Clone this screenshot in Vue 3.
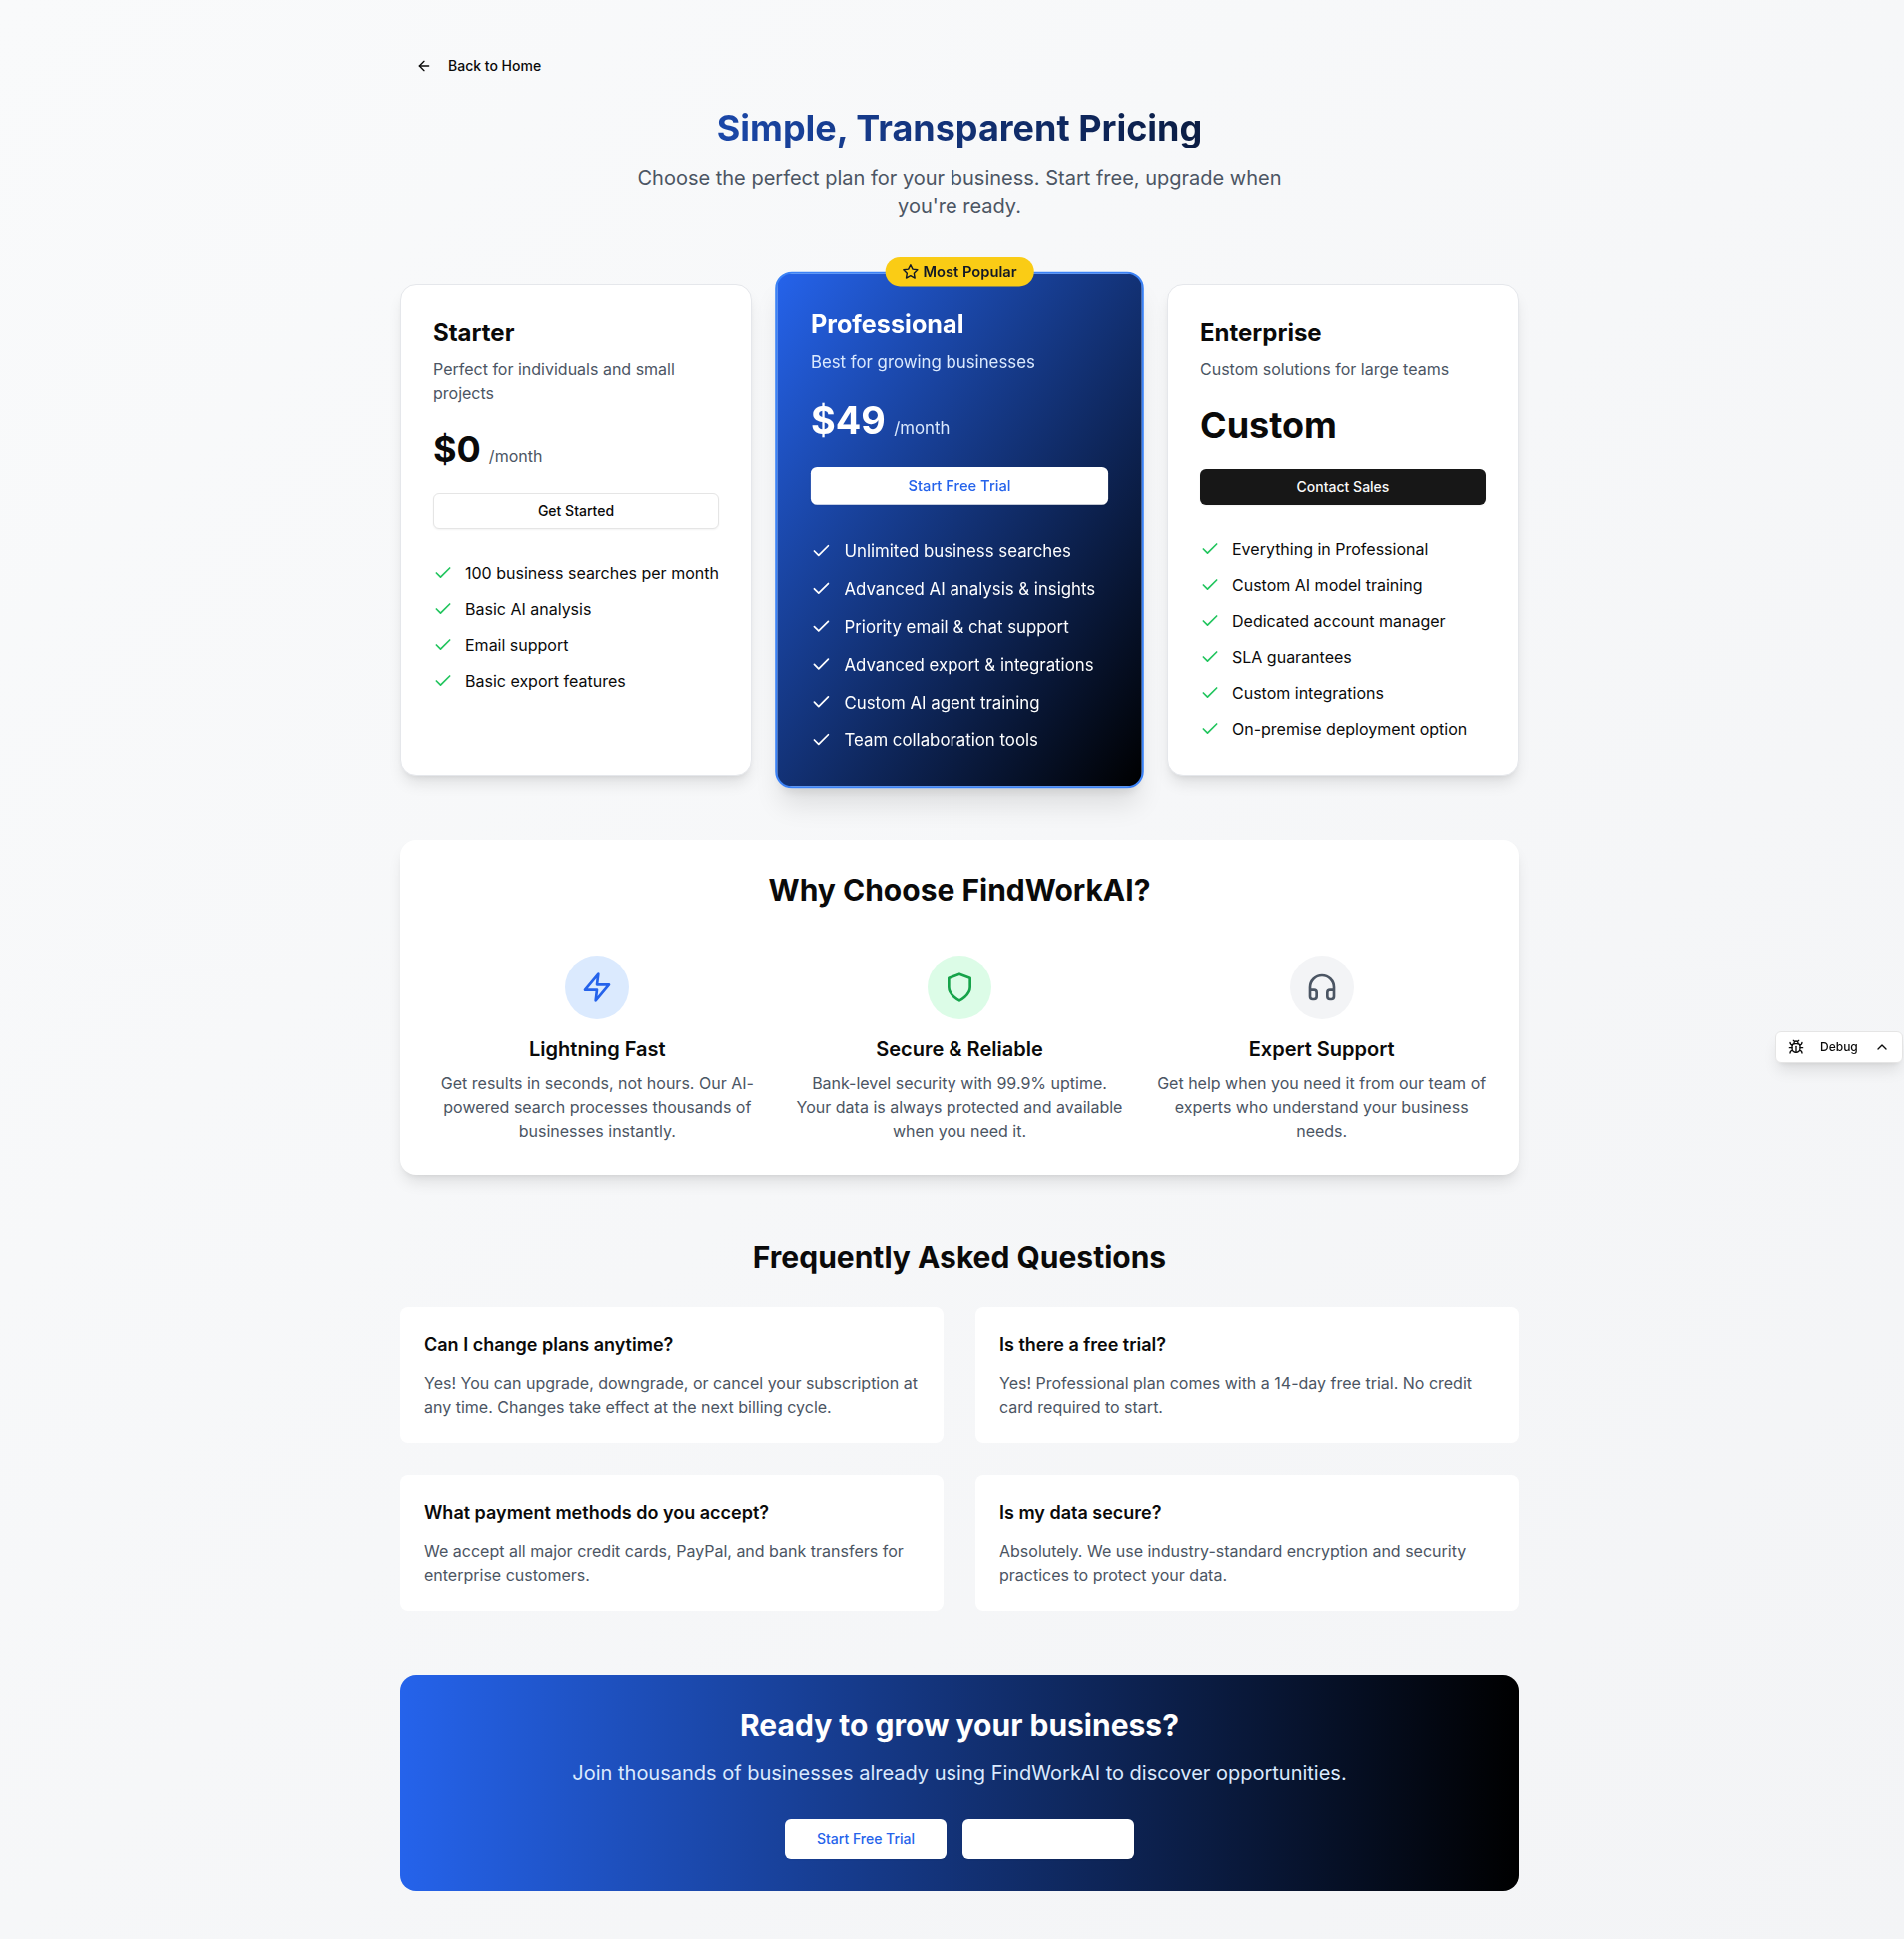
<script setup>
const plans = [
  {
    name: 'Starter',
    description: 'Perfect for individuals and small projects',
    price: '$0',
    period: '/month',
    action: 'Get Started',
    variant: 'outline',
    features: ['100 business searches per month', 'Basic AI analysis', 'Email support', 'Basic export features'],
  },
  {
    name: 'Professional',
    description: 'Best for growing businesses',
    price: '$49',
    period: '/month',
    action: 'Start Free Trial',
    variant: 'light',
    popular: true,
    features: [
      'Unlimited business searches',
      'Advanced AI analysis & insights',
      'Priority email & chat support',
      'Advanced export & integrations',
      'Custom AI agent training',
      'Team collaboration tools',
    ],
  },
  {
    name: 'Enterprise',
    description: 'Custom solutions for large teams',
    price: 'Custom',
    action: 'Contact Sales',
    variant: 'dark',
    features: [
      'Everything in Professional',
      'Custom AI model training',
      'Dedicated account manager',
      'SLA guarantees',
      'Custom integrations',
      'On-premise deployment option',
    ],
  },
]

const benefits = [
  {
    tone: 'blue',
    title: 'Lightning Fast',
    text: 'Get results in seconds, not hours. Our AI-powered search processes thousands of businesses instantly.',
    icon: 'M13 2 3 14h9l-1 8 10-12h-9l1-8z',
  },
  {
    tone: 'green',
    title: 'Secure & Reliable',
    text: 'Bank-level security with 99.9% uptime. Your data is always protected and available when you need it.',
    icon: 'M12 22s8-4 8-10V5l-8-3-8 3v7c0 6 8 10 8 10',
  },
  {
    tone: 'gray',
    title: 'Expert Support',
    text: 'Get help when you need it from our team of experts who understand your business needs.',
    icon: 'M3 14h3a2 2 0 0 1 2 2v3a2 2 0 0 1-2 2H5a2 2 0 0 1-2-2v-7a9 9 0 0 1 18 0v7a2 2 0 0 1-2 2h-1a2 2 0 0 1-2-2v-3a2 2 0 0 1 2-2h3',
  },
]

const faqs = [
  {
    question: 'Can I change plans anytime?',
    answer: 'Yes! You can upgrade, downgrade, or cancel your subscription at any time. Changes take effect at the next billing cycle.',
  },
  {
    question: 'Is there a free trial?',
    answer: 'Yes! Professional plan comes with a 14-day free trial. No credit card required to start.',
  },
  {
    question: 'What payment methods do you accept?',
    answer: 'We accept all major credit cards, PayPal, and bank transfers for enterprise customers.',
  },
  {
    question: 'Is my data secure?',
    answer: 'Absolutely. We use industry-standard encryption and security practices to protect your data.',
  },
]
</script>

<template>
  <div class="page">
    <main class="container">
      <header class="intro">
        <button class="btn back">
          <svg class="icon" viewBox="0 0 24 24"><path d="m12 19-7-7 7-7" /><path d="M19 12H5" /></svg>
          Back to Home
        </button>
        <h1>Simple, Transparent Pricing</h1>
        <p>Choose the perfect plan for your business. Start free, upgrade when you're ready.</p>
      </header>

      <section class="plans">
        <article v-for="plan in plans" :key="plan.name" class="plan" :class="{ popular: plan.popular }">
          <div v-if="plan.popular" class="badge">
            <svg class="icon" viewBox="0 0 24 24">
              <polygon points="12 2 15.09 8.26 22 9.27 17 14.14 18.18 21.02 12 17.77 5.82 21.02 7 14.14 2 9.27 8.91 8.26 12 2" />
            </svg>
            Most Popular
          </div>
          <h3>{{ plan.name }}</h3>
          <p class="description">{{ plan.description }}</p>
          <div class="price">
            <span class="amount">{{ plan.price }}</span>
            <span v-if="plan.period" class="period">{{ plan.period }}</span>
          </div>
          <button class="btn wide" :class="plan.variant">{{ plan.action }}</button>
          <ul>
            <li v-for="feature in plan.features" :key="feature">
              <svg class="check" viewBox="0 0 24 24"><path d="M20 6 9 17l-5-5" /></svg>
              <span>{{ feature }}</span>
            </li>
          </ul>
        </article>
      </section>

      <section class="benefits">
        <h2>Why Choose FindWorkAI?</h2>
        <div class="benefit-grid">
          <div v-for="item in benefits" :key="item.title" class="benefit">
            <div class="disc" :class="item.tone">
              <svg viewBox="0 0 24 24"><path :d="item.icon" /></svg>
            </div>
            <h3>{{ item.title }}</h3>
            <p>{{ item.text }}</p>
          </div>
        </div>
      </section>

      <section class="faq">
        <h2>Frequently Asked Questions</h2>
        <div class="faq-grid">
          <article v-for="faq in faqs" :key="faq.question">
            <h3>{{ faq.question }}</h3>
            <p>{{ faq.answer }}</p>
          </article>
        </div>
      </section>

      <section class="cta">
        <h2>Ready to grow your business?</h2>
        <p>Join thousands of businesses already using FindWorkAI to discover opportunities.</p>
        <div class="cta-actions">
          <button class="btn large light">Start Free Trial</button>
          <button class="btn large blank"></button>
        </div>
      </section>
    </main>

    <button class="debug">
      <svg class="bug" viewBox="0 0 24 24">
        <path d="m8 2 1.88 1.88" /><path d="M14.12 3.88 16 2" /><path d="M9 7.13v-1a3.003 3.003 0 1 1 6 0v1" />
        <path d="M12 20c-3.3 0-6-2.7-6-6v-3a4 4 0 0 1 4-4h4a4 4 0 0 1 4 4v3c0 3.3-2.7 6-6 6" />
        <path d="M12 20v-9" /><path d="M6.53 9C4.6 8.8 3 7.1 3 5" /><path d="M6 13H2" />
        <path d="M3 21c0-2.1 1.7-3.9 3.8-4" /><path d="M20.97 5c0 2.1-1.6 3.8-3.5 4" />
        <path d="M22 13h-4" /><path d="M17.2 17c2.1.1 3.8 1.9 3.8 4" />
      </svg>
      <span>Debug</span>
      <svg class="chevron" viewBox="0 0 24 24"><path d="m18 15-6-6-6 6" /></svg>
    </button>
  </div>
</template>

<style>
body {
  margin: 0;
  overflow-x: hidden;
}
</style>

<style scoped>
* {
  box-sizing: border-box;
}

.page {
  width: 1920px;
  min-height: 1940px;
  padding: 48px 0;
  background: linear-gradient(to bottom right, #f9fafb, #f3f4f6);
  color: #0a0a0a;
  font-family: Inter, sans-serif;
  font-size: 16px;
  line-height: 24px;
}

.container {
  width: 1120px;
  margin: 0 auto;
}

h1, h2, h3, p, ul {
  margin: 0;
  padding: 0;
}

svg {
  flex-shrink: 0;
  fill: none;
  stroke: currentColor;
  stroke-width: 2;
  stroke-linecap: round;
  stroke-linejoin: round;
}

.icon {
  width: 16px;
  height: 16px;
}

h2 {
  font-size: 30px;
  line-height: 36px;
  font-weight: 700;
  text-align: center;
}

.btn {
  display: flex;
  align-items: center;
  justify-content: center;
  height: 36px;
  padding: 0 16px;
  border: 0;
  border-radius: 6px;
  background: none;
  color: inherit;
  font: 500 14px/20px Inter, sans-serif;
  box-shadow: 0 1px 2px rgba(0, 0, 0, 0.05);
}

.btn.back {
  gap: 16px;
  margin-bottom: 24px;
  box-shadow: none;
}

.btn.wide {
  width: 100%;
}

.btn.outline {
  border: 1px solid #e5e5e5;
  background: #fff;
}

.btn.light {
  background: #fff;
  color: #2563eb;
}

.btn.dark {
  background: #171717;
  color: #fafafa;
}

.btn.large {
  height: 40px;
  padding: 0 32px;
}

.btn.blank {
  width: 172px;
  background: #fff;
}

h1 {
  background: linear-gradient(to right, #2563eb, #000);
  background-clip: text;
  color: transparent;
  font-size: 36px;
  line-height: 40px;
  font-weight: 700;
  text-align: center;
}

.intro p {
  max-width: 672px;
  margin: 16px auto 64px;
  color: #4b5563;
  font-size: 20px;
  line-height: 28px;
  text-align: center;
}

.plans {
  display: grid;
  grid-template-columns: repeat(3, 1fr);
  gap: 32px;
}

.plan {
  position: relative;
  padding: 32px;
  border: 1px solid #e5e7eb;
  border-radius: 16px;
  background: #fff;
  box-shadow: 0 10px 15px -3px rgba(0, 0, 0, 0.1), 0 4px 6px -4px rgba(0, 0, 0, 0.1);
}

.plan.popular {
  border: 2px solid #3b82f6;
  background: linear-gradient(to bottom right, #2563eb, #000);
  box-shadow: 0 20px 25px -5px rgba(0, 0, 0, 0.1), 0 8px 10px -6px rgba(0, 0, 0, 0.1);
  color: #fff;
  transform: scale(1.05);
}

.badge {
  position: absolute;
  top: -16px;
  left: 50%;
  display: flex;
  align-items: center;
  gap: 4px;
  padding: 4px 16px;
  border-radius: 14px;
  background: #facc15;
  color: #111827;
  font-size: 14px;
  line-height: 20px;
  font-weight: 600;
  white-space: nowrap;
  transform: translateX(-50%);
}

.plan h3 {
  margin-bottom: 8px;
  font-size: 24px;
  line-height: 32px;
  font-weight: 700;
}

.description,
.period {
  color: #4b5563;
}

.popular .description,
.popular .period {
  color: #dbeafe;
}

.price {
  display: flex;
  align-items: baseline;
  gap: 8px;
  height: 40px;
  margin: 24px 0;
}

.amount {
  font-size: 36px;
  line-height: 40px;
  font-weight: 700;
}

ul {
  display: flex;
  flex-direction: column;
  gap: 12px;
  margin-top: 32px;
  list-style: none;
}

li {
  display: flex;
  align-items: center;
  gap: 12px;
  white-space: nowrap;
}

.check {
  width: 20px;
  height: 20px;
  color: #22c55e;
}

.popular .check {
  color: #fff;
}

.benefits {
  margin-top: 64px;
  padding: 32px;
  border-radius: 16px;
  background: #fff;
  box-shadow: 0 10px 15px -3px rgba(0, 0, 0, 0.1), 0 4px 6px -4px rgba(0, 0, 0, 0.1);
}

.benefit-grid {
  display: grid;
  grid-template-columns: repeat(3, 1fr);
  gap: 32px;
  margin-top: 48px;
}

.benefit {
  text-align: center;
}

.disc {
  display: flex;
  align-items: center;
  justify-content: center;
  width: 64px;
  height: 64px;
  margin: 0 auto 16px;
  border-radius: 50%;
}

.disc svg {
  width: 32px;
  height: 32px;
}

.disc.blue {
  background: #dbeafe;
  color: #2563eb;
}

.disc.green {
  background: #dcfce7;
  color: #16a34a;
}

.disc.gray {
  background: #f3f4f6;
  color: #4b5563;
}

.benefit h3 {
  margin-bottom: 8px;
  font-size: 20px;
  line-height: 28px;
  font-weight: 600;
}

.benefit p,
.faq p {
  color: #4b5563;
}

.faq {
  margin: 64px 0;
}

.faq-grid {
  display: grid;
  grid-template-columns: repeat(2, 1fr);
  gap: 32px;
  margin-top: 32px;
}

.faq article {
  padding: 24px;
  border-radius: 8px;
  background: #fff;
}

.faq h3 {
  margin-bottom: 12px;
  font-size: 18px;
  line-height: 28px;
  font-weight: 600;
}

.cta {
  padding: 32px;
  border-radius: 16px;
  background: linear-gradient(to right, #2563eb, #000);
  color: #fff;
  text-align: center;
}

.cta p {
  margin: 16px 0 32px;
  color: #dbeafe;
  font-size: 20px;
  line-height: 28px;
}

.cta-actions {
  display: flex;
  justify-content: center;
  gap: 16px;
}

.debug {
  position: fixed;
  top: 1032px;
  left: 1776px;
  display: flex;
  align-items: center;
  width: 128px;
  height: 32px;
  padding: 0 12px;
  border: 1px solid #e5e5e5;
  border-radius: 6px;
  background: #fff;
  box-shadow: 0 10px 15px -3px rgba(0, 0, 0, 0.1), 0 4px 6px -4px rgba(0, 0, 0, 0.1);
  color: #0a0a0a;
  font: 500 12px/16px Inter, sans-serif;
}

.bug {
  width: 16px;
  height: 16px;
  margin-right: 16px;
}

.chevron {
  width: 16px;
  height: 16px;
  margin-left: auto;
}
</style>
